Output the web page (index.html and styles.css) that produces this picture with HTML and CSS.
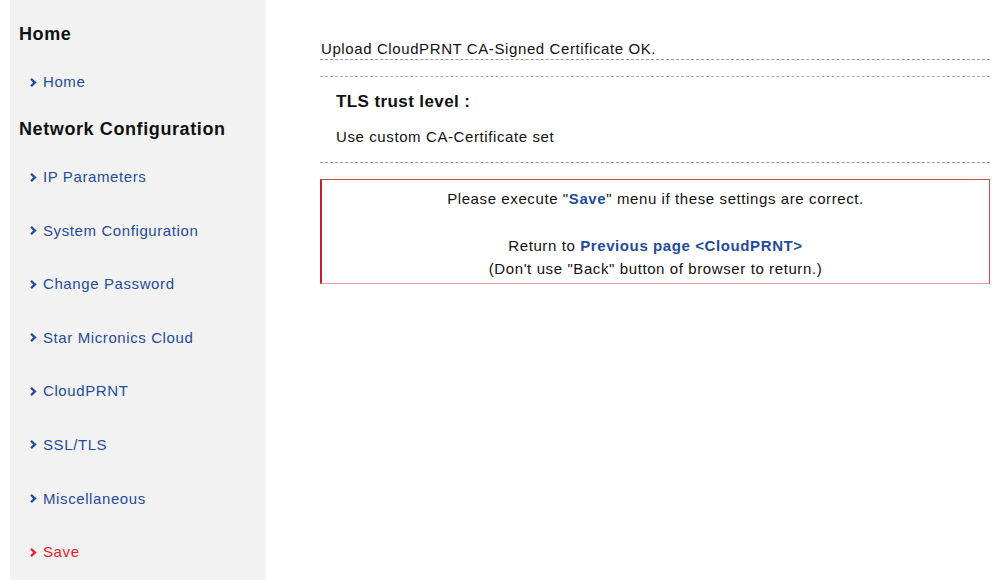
FILE: index.html
```html
<!DOCTYPE html>
<html>
<head>
<meta charset="utf-8">
<title>Network Configuration</title>
<link rel="stylesheet" href="styles.css">
</head>
<body>
<div class="page">
  <nav class="sidebar">
    <section class="menu-section">
      <h2 class="menu-title">Home</h2>
      <ul class="menu-list">
        <li class="menu-item"><a class="menu-link" href="#"><svg class="chev" viewBox="0 0 7 9" width="7" height="9"><path d="M0.2 1.7 L1.8 0.1 L6.6 4.5 L1.8 8.9 L0.2 7.3 L3.3 4.5 Z" fill="currentColor"/></svg>Home</a></li>
      </ul>
    </section>
    <section class="menu-section">
      <h2 class="menu-title">Network Configuration</h2>
      <ul class="menu-list">
        <li class="menu-item"><a class="menu-link" href="#"><svg class="chev" viewBox="0 0 7 9" width="7" height="9"><path d="M0.2 1.7 L1.8 0.1 L6.6 4.5 L1.8 8.9 L0.2 7.3 L3.3 4.5 Z" fill="currentColor"/></svg>IP Parameters</a></li>
        <li class="menu-item"><a class="menu-link" href="#"><svg class="chev" viewBox="0 0 7 9" width="7" height="9"><path d="M0.2 1.7 L1.8 0.1 L6.6 4.5 L1.8 8.9 L0.2 7.3 L3.3 4.5 Z" fill="currentColor"/></svg>System Configuration</a></li>
        <li class="menu-item"><a class="menu-link" href="#"><svg class="chev" viewBox="0 0 7 9" width="7" height="9"><path d="M0.2 1.7 L1.8 0.1 L6.6 4.5 L1.8 8.9 L0.2 7.3 L3.3 4.5 Z" fill="currentColor"/></svg>Change Password</a></li>
        <li class="menu-item"><a class="menu-link" href="#"><svg class="chev" viewBox="0 0 7 9" width="7" height="9"><path d="M0.2 1.7 L1.8 0.1 L6.6 4.5 L1.8 8.9 L0.2 7.3 L3.3 4.5 Z" fill="currentColor"/></svg>Star Micronics Cloud</a></li>
        <li class="menu-item"><a class="menu-link" href="#"><svg class="chev" viewBox="0 0 7 9" width="7" height="9"><path d="M0.2 1.7 L1.8 0.1 L6.6 4.5 L1.8 8.9 L0.2 7.3 L3.3 4.5 Z" fill="currentColor"/></svg>CloudPRNT</a></li>
        <li class="menu-item"><a class="menu-link" href="#"><svg class="chev" viewBox="0 0 7 9" width="7" height="9"><path d="M0.2 1.7 L1.8 0.1 L6.6 4.5 L1.8 8.9 L0.2 7.3 L3.3 4.5 Z" fill="currentColor"/></svg>SSL/TLS</a></li>
        <li class="menu-item"><a class="menu-link" href="#"><svg class="chev" viewBox="0 0 7 9" width="7" height="9"><path d="M0.2 1.7 L1.8 0.1 L6.6 4.5 L1.8 8.9 L0.2 7.3 L3.3 4.5 Z" fill="currentColor"/></svg>Miscellaneous</a></li>
        <li class="menu-item"><a class="menu-link menu-save" href="#"><svg class="chev" viewBox="0 0 7 9" width="7" height="9"><path d="M0.2 1.7 L1.8 0.1 L6.6 4.5 L1.8 8.9 L0.2 7.3 L3.3 4.5 Z" fill="currentColor"/></svg>Save</a></li>
      </ul>
    </section>
  </nav>
  <main class="content">
    <p class="result">Upload CloudPRNT CA-Signed Certificate OK.</p>
    <div class="setting">
      <h3 class="setting-title">TLS trust level :</h3>
      <p class="setting-value">Use custom CA-Certificate set</p>
    </div>
    <div class="notice">
      <p class="notice-line">Please execute "<a class="notice-link" href="#">Save</a>" menu if these settings are correct.</p>
      <p class="notice-return">Return to <a class="notice-link" href="#">Previous page &lt;CloudPRNT&gt;</a><br>(Don't use "Back" button of browser to return.)</p>
    </div>
  </main>
</div>
</body>
</html>
```

FILE: styles.css
```css
html, body {
  margin: 0;
  padding: 0;
  background: #ffffff;
}
body {
  font-family: "Liberation Sans", Arial, sans-serif;
  color: #111111;
}
.page {
  display: flex;
  align-items: stretch;
  min-height: 580px;
}
.sidebar {
  margin-left: 10px;
  width: 256px;
  flex: 0 0 256px;
  background: #f2f2f2;
  padding: 24px 0 0 9px;
  box-sizing: border-box;
  min-height: 580px;
}
.menu-section + .menu-section {
  margin-top: 27px;
}
.menu-title {
  margin: 0 0 28px 0;
  font-size: 18px;
  line-height: 20px;
  height: 20px;
  font-weight: bold;
  letter-spacing: 0.6px;
  color: #111111;
}
.menu-list {
  list-style: none;
  margin: 0;
  padding: 0 0 0 11px;
}
.menu-item {
  height: 20px;
  line-height: 20px;
  font-size: 15px;
  letter-spacing: 0.6px;
}
.menu-item + .menu-item {
  margin-top: 33.6px;
}
.menu-link {
  display: flex;
  align-items: center;
  height: 20px;
  color: #1f4c9c;
  text-decoration: none;
}
.menu-save {
  color: #ee1c25;
}
.chev {
  margin-right: 6px;
  flex: 0 0 auto;
}
.content {
  margin-left: 54px;
  width: 670px;
  padding-top: 39px;
  font-size: 15px;
  letter-spacing: 0.6px;
}
.result {
  margin: 0;
  line-height: 20px;
  padding-left: 1px;
  border-bottom: 1px dashed #9a9a9a;
}
.setting {
  margin-top: 16px;
  border-top: 1px dashed #b0b0b0;
  border-bottom: 1px dashed #9a9a9a;
  padding: 15px 0 15px 16px;
}
.setting-title {
  margin: 0;
  font-size: 17px;
  line-height: 20px;
  font-weight: bold;
  letter-spacing: 0.4px;
}
.setting-value {
  margin: 15px 0 0 0;
  line-height: 20px;
}
.notice {
  margin-top: 16px;
  border: 1px solid #d94a4a;
  border-bottom-color: #e59a9a;
  border-left: 2px solid #c8202a;
  padding: 9px 0 3px 0;
  text-align: center;
}
.notice-line {
  margin: 0;
  line-height: 20px;
}
.notice-return {
  margin: 24.5px 0 0 0;
  line-height: 23px;
}
.notice-link {
  color: #1f4c9c;
  font-weight: bold;
  text-decoration: none;
}
```
